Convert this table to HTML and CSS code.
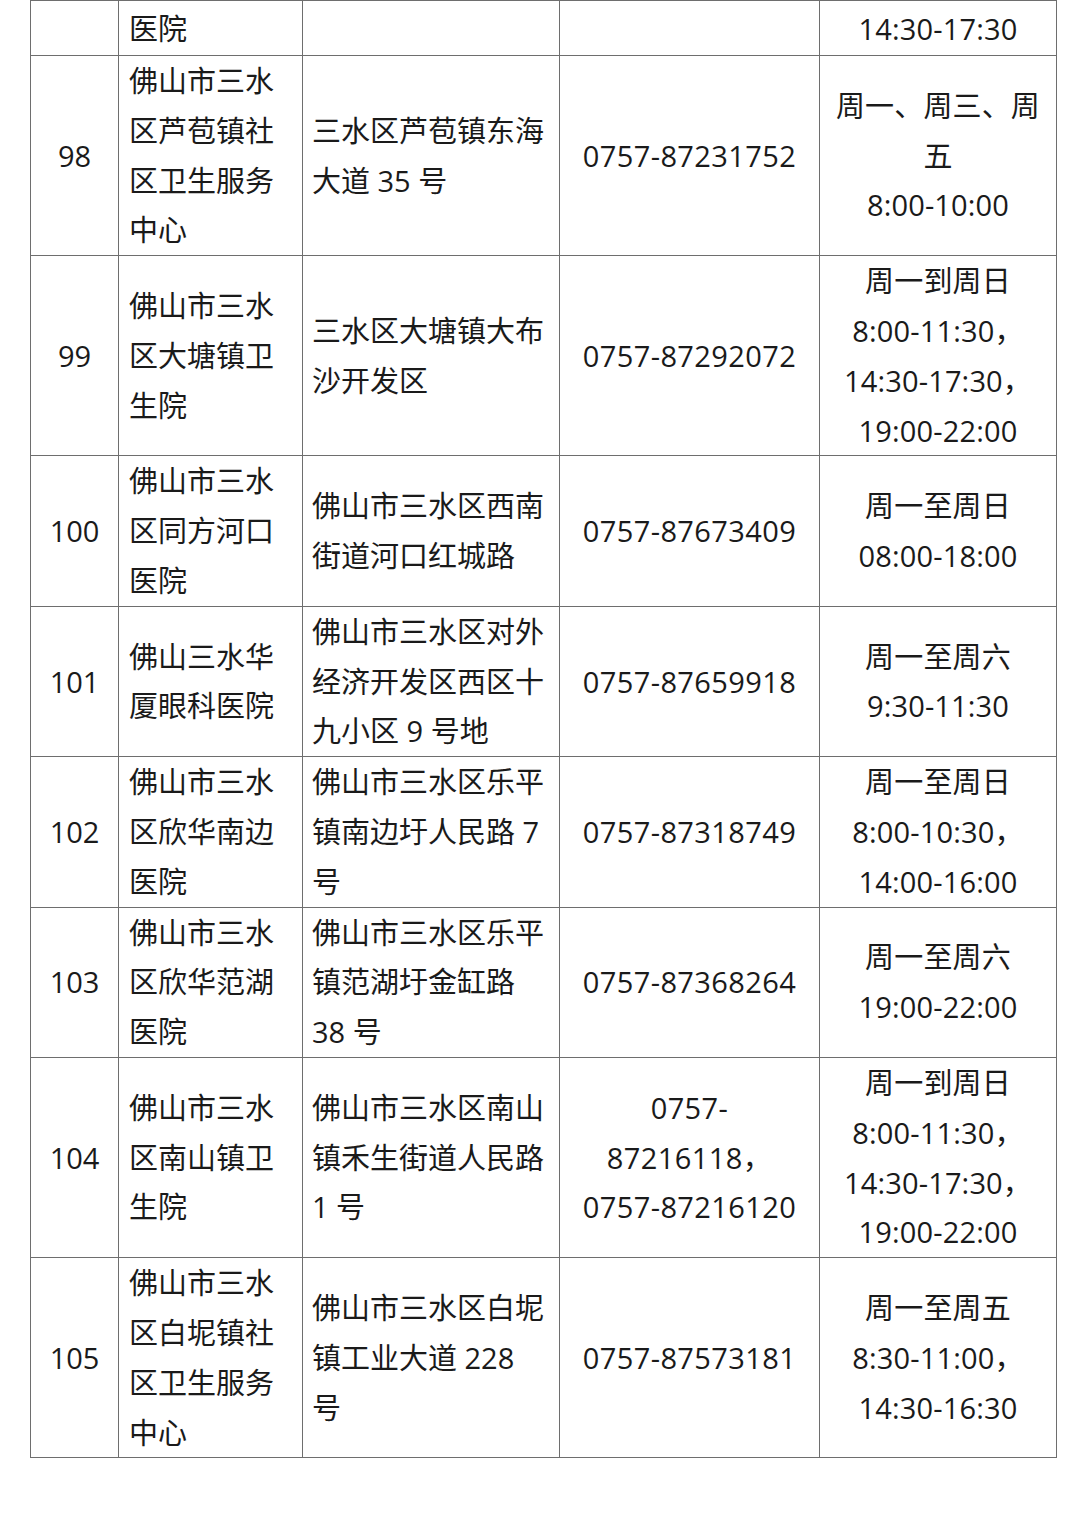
FILE: index.html
```html
<!DOCTYPE html>
<html lang="zh-CN">
<head>
<meta charset="utf-8">
<title>佛山市三水区医疗机构</title>
<link rel="stylesheet" href="styles.css">
</head>
<body>
<table class="list">
  <colgroup>
    <col class="c-no">
    <col class="c-name">
    <col class="c-addr">
    <col class="c-tel">
    <col class="c-time">
  </colgroup>
  <tbody>
    <tr class="partial">
      <td class="no"></td>
      <td class="name">医院</td>
      <td class="addr"></td>
      <td class="tel"></td>
      <td class="time">14:30-17:30</td>
    </tr>
    <tr>
      <td class="no">98</td>
      <td class="name">佛山市三水<br>区芦苞镇社<br>区卫生服务<br>中心</td>
      <td class="addr">三水区芦苞镇东海<br>大道 35 号</td>
      <td class="tel">0757-87231752</td>
      <td class="time">周一、周三、周<br>五<br>8:00-10:00</td>
    </tr>
    <tr>
      <td class="no">99</td>
      <td class="name">佛山市三水<br>区大塘镇卫<br>生院</td>
      <td class="addr">三水区大塘镇大布<br>沙开发区</td>
      <td class="tel">0757-87292072</td>
      <td class="time">周一到周日<br>8:00-11:30，<br>14:30-17:30，<br>19:00-22:00</td>
    </tr>
    <tr>
      <td class="no">100</td>
      <td class="name">佛山市三水<br>区同方河口<br>医院</td>
      <td class="addr">佛山市三水区西南<br>街道河口红城路</td>
      <td class="tel">0757-87673409</td>
      <td class="time">周一至周日<br>08:00-18:00</td>
    </tr>
    <tr>
      <td class="no">101</td>
      <td class="name">佛山三水华<br>厦眼科医院</td>
      <td class="addr">佛山市三水区对外<br>经济开发区西区十<br>九小区 9 号地</td>
      <td class="tel">0757-87659918</td>
      <td class="time">周一至周六<br>9:30-11:30</td>
    </tr>
    <tr>
      <td class="no">102</td>
      <td class="name">佛山市三水<br>区欣华南边<br>医院</td>
      <td class="addr">佛山市三水区乐平<br>镇南边圩人民路 7<br>号</td>
      <td class="tel">0757-87318749</td>
      <td class="time">周一至周日<br>8:00-10:30，<br>14:00-16:00</td>
    </tr>
    <tr>
      <td class="no">103</td>
      <td class="name">佛山市三水<br>区欣华范湖<br>医院</td>
      <td class="addr">佛山市三水区乐平<br>镇范湖圩金缸路<br>38 号</td>
      <td class="tel">0757-87368264</td>
      <td class="time">周一至周六<br>19:00-22:00</td>
    </tr>
    <tr>
      <td class="no">104</td>
      <td class="name">佛山市三水<br>区南山镇卫<br>生院</td>
      <td class="addr">佛山市三水区南山<br>镇禾生街道人民路<br>1 号</td>
      <td class="tel">0757-<br>87216118，<br>0757-87216120</td>
      <td class="time">周一到周日<br>8:00-11:30，<br>14:30-17:30，<br>19:00-22:00</td>
    </tr>
    <tr>
      <td class="no">105</td>
      <td class="name">佛山市三水<br>区白坭镇社<br>区卫生服务<br>中心</td>
      <td class="addr">佛山市三水区白坭<br>镇工业大道 228<br>号</td>
      <td class="tel">0757-87573181</td>
      <td class="time">周一至周五<br>8:30-11:00，<br>14:30-16:30</td>
    </tr>
  </tbody>
</table>
</body>
</html>
```
FILE: styles.css
```css
html, body {
  margin: 0;
  padding: 0;
  background: #ffffff;
}

body {
  font-family: "Open Sans", "Noto Sans CJK SC", sans-serif;
  font-size: 29px;
  color: #1a1a1a;
}

.list {
  border-collapse: collapse;
  table-layout: fixed;
  width: 1026px;
  margin: 0 0 0 30px;
}

.c-no { width: 88px; }
.c-name { width: 184px; }
.c-addr { width: 257px; }
.c-tel { width: 260px; }
.c-time { width: 237px; }

.list td {
  border: 1px solid #6e6e6e;
  padding: 0;
  line-height: 49.8px;
  vertical-align: middle;
  white-space: nowrap;
}

.list .partial td {
  height: 53px;
  vertical-align: bottom;
  padding-bottom: 1px;
}

.no {
  text-align: center;
}

.list .name {
  padding-left: 10px;
  text-align: left;
}

.list .addr {
  padding-left: 9px;
  text-align: left;
}

.tel {
  text-align: center;
  letter-spacing: 0.4px;
}

.time {
  text-align: center;
  letter-spacing: 0.15px;
}
```
